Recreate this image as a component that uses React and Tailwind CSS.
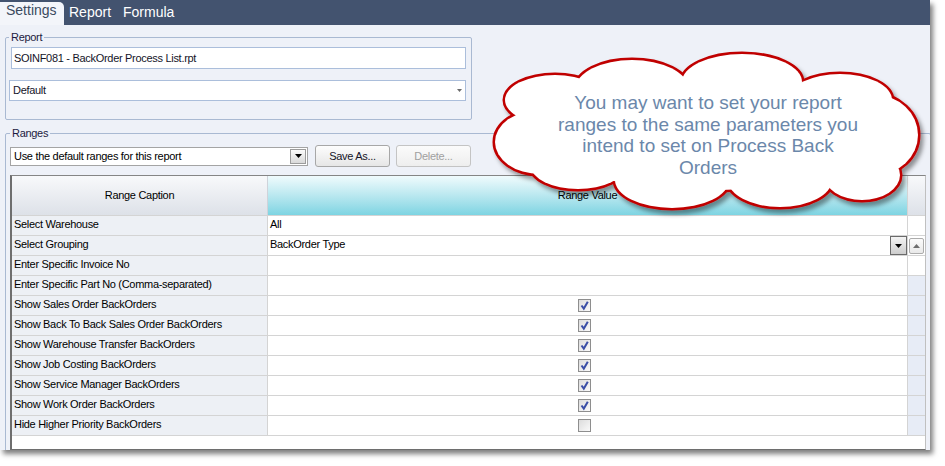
import React from 'react';

const rows = [
  { caption: 'Select Warehouse', value: 'All' },
  { caption: 'Select Grouping', value: 'BackOrder Type', combo: true },
  { caption: 'Enter Specific Invoice No' },
  { caption: 'Enter Specific Part No (Comma-separated)' },
  { caption: 'Show Sales Order BackOrders', check: true },
  { caption: 'Show Back To Back Sales Order BackOrders', check: true },
  { caption: 'Show Warehouse Transfer BackOrders', check: true },
  { caption: 'Show Job Costing BackOrders', check: true },
  { caption: 'Show Service Manager BackOrders', check: true },
  { caption: 'Show Work Order BackOrders', check: true },
  { caption: 'Hide Higher Priority BackOrders', check: false },
];

// cloud bumps, in page coordinates
const bumps = [
  [555, 100, 50, 25],
  [632, 88, 56, 28],
  [742, 82, 60, 28],
  [840, 100, 52, 26],
  [875, 135, 43, 40],
  [862, 175, 38, 25],
  [780, 180, 52, 27],
  [672, 180, 57, 28],
  [578, 166, 47, 23],
  [540, 142, 45, 32],
  [710, 135, 175, 55],
];

function DownArrow({ className = 'fill-black' }) {
  return (
    <svg width="7" height="4" viewBox="0 0 7 4" className={className}>
      <polygon points="0,0 7,0 3.5,4" />
    </svg>
  );
}

function CheckBox({ checked }) {
  return (
    <div className="flex h-[13px] w-[13px] items-center justify-center border border-[#8e8e8e] bg-gradient-to-br from-[#dcdcdc] to-[#fafafa]">
      {checked && (
        <svg width="11" height="11" viewBox="0 0 11 11">
          <path d="M2.5 5.5 L4.8 8.6 L8.8 1.8" fill="none" stroke="#3a4ea6" strokeWidth="2" />
        </svg>
      )}
    </div>
  );
}

function Cloud() {
  return (
    <svg
      className="absolute left-[490px] top-[48px]"
      width="440"
      height="172"
      viewBox="490 48 440 172"
    >
      <defs>
        <filter id="cloudShadow" x="-10%" y="-10%" width="120%" height="130%">
          <feDropShadow dx="3" dy="4" stdDeviation="2" floodColor="#000" floodOpacity="0.4" />
        </filter>
      </defs>
      <g filter="url(#cloudShadow)">
        {bumps.map(([cx, cy, rx, ry], i) => (
          <ellipse key={'s' + i} cx={cx} cy={cy} rx={rx} ry={ry} fill="#fff" stroke="#c00000" strokeWidth="5" />
        ))}
        {bumps.map(([cx, cy, rx, ry], i) => (
          <ellipse key={'f' + i} cx={cx} cy={cy} rx={rx} ry={ry} fill="#fff" />
        ))}
      </g>
    </svg>
  );
}

export default function App() {
  return (
    <div className="min-h-screen bg-white font-['Liberation_Sans',Arial,sans-serif]">
      <div className="relative h-[450px] w-[930px] overflow-hidden bg-[#eef1f8] shadow-[3px_4px_5px_rgba(0,0,0,0.5)]">
        {/* tab strip */}
        <div className="flex h-[25px] items-end bg-[#43536f] text-[14px] leading-[17px]">
          <div className="h-[23px] w-[64px] rounded-tr-[5px] bg-[#f3f5fa] pl-[6px] text-[#3b4a5f]">Settings</div>
          <div className="ml-[5px] h-[23px] pt-[2px] text-white">Report</div>
          <div className="ml-[12px] h-[23px] pt-[2px] text-white">Formula</div>
        </div>

        <div className="px-[5px] text-[11px] tracking-[-0.3px] text-black">
          {/* Report group */}
          <fieldset className="mt-[6px] h-[89px] w-[465px] rounded-[2px] border border-[#a9b9d2] px-[5px]">
            <legend className="-ml-[2px] px-[2px] leading-[13px] text-[#1c1a40]">Report</legend>
            <div className="mt-[3px] flex h-[22px] w-[455px] items-center border border-[#abbedb] bg-white pl-[2px] text-[#141428]">
              SOINF081 - BackOrder Process List.rpt
            </div>
            <div className="-ml-[2px] mt-[11px] flex h-[21px] w-[457px] items-center justify-between border border-[#abbedb] bg-white pl-[3px] pr-[3px] text-[#141428]">
              <span>Default</span>
              <svg width="5" height="3" viewBox="0 0 5 3" className="fill-[#6a6a6a]">
                <polygon points="0,0 5,0 2.5,3" />
              </svg>
            </div>
          </fieldset>

          {/* Ranges group */}
          <fieldset className="mt-[7px] h-[340px] w-[923px] rounded-[2px] border border-[#a9b9d2] px-[4px]">
            <legend className="px-[2px] leading-[13px] text-[#1c1a40]">Ranges</legend>
            <div className="mt-[5px] flex h-[22px] items-center">
              <div className="flex h-[19px] w-[298px] items-center justify-between border border-[#a4a4a4] bg-white pl-[3px] pr-[1px]">
                <span>Use the default ranges for this report</span>
                <div className="flex h-[15px] w-[16px] items-center justify-center border border-[#9c9c9c] bg-gradient-to-b from-[#fbfbfb] to-[#d9d9d9]">
                  <DownArrow />
                </div>
              </div>
              <button className="ml-[7px] h-[22px] w-[75px] rounded-[3px] border border-[#a7a7a7] bg-gradient-to-b from-[#fdfdfd] to-[#e6e6e6] text-[#141428]">
                Save As...
              </button>
              <button className="ml-[6px] h-[22px] w-[75px] rounded-[3px] border border-[#c4c4c4] bg-gradient-to-b from-[#fbfbfb] to-[#eeeeee] text-[#a0a0a0]">
                Delete...
              </button>
            </div>

            {/* grid */}
            <div className="mt-[8px] h-[275px] w-[916px] border-b border-l-2 border-r border-t border-b-[#6e6e6e] border-l-[#6e6e6e] border-r-[#c0c0c0] border-t-[#858585] bg-white">
              <div className="flex h-[40px] border-b border-[#d4d4d4]">
                <div className="flex w-[256px] items-center justify-center border-r border-[#cfd3da] bg-gradient-to-b from-[#f8f9fb] to-[#dde1e8]">
                  Range Caption
                </div>
                <div className="flex w-[640px] items-center justify-center border-r border-[#d4d4d4] bg-gradient-to-b from-[#f0fbfd] to-[#7dd4e2]">
                  Range Value
                </div>
                <div className="w-[17px] bg-gradient-to-b from-[#f8f9fb] to-[#dde1e8]" />
              </div>
              {rows.map((r, i) => (
                <div key={i} className="flex h-[20px] border-b border-[#d4d4d4]">
                  <div className="flex w-[256px] items-center border-r border-[#d4d4d4] bg-[#edf0f5] pb-[2px] pl-[2px]">{r.caption}</div>
                  <div className="flex w-[640px] items-center border-r border-[#d4d4d4] pl-[2px]">
                    {r.value && <span className="flex-1 pb-[2px]">{r.value}</span>}
                    {r.combo && (
                      <div className="flex h-[19px] w-[17px] items-center justify-center border border-[#6a6a6a] bg-gradient-to-b from-[#f4f4f4] to-[#cdcdcd]">
                        <DownArrow />
                      </div>
                    )}
                    {r.check !== undefined && (
                      <div className="pl-[308px]">
                        <CheckBox checked={r.check} />
                      </div>
                    )}
                  </div>
                  <div className={`flex w-[17px] items-center justify-center ${i >= 3 ? 'bg-[#e7ecf6]' : 'bg-white'}`}>
                    {i === 1 && (
                      <div className="flex h-[16px] w-[15px] items-center justify-center rounded-[2px] border border-[#acacac] bg-gradient-to-b from-[#fbfbfb] to-[#e9e9e9]">
                        <svg width="7" height="4" viewBox="0 0 7 4" className="fill-[#6e6e6e]">
                          <polygon points="3.5,0 7,4 0,4" />
                        </svg>
                      </div>
                    )}
                  </div>
                </div>
              ))}
            </div>
          </fieldset>
        </div>

        {/* callout */}
        <Cloud />
        <div className="absolute left-[508px] top-[92px] w-[400px] text-center text-[19px] leading-[21.5px] text-[#6b87aa]">
          <div>You may want to set your report</div>
          <div>ranges to the same parameters you</div>
          <div>intend to set on Process Back</div>
          <div>Orders</div>
        </div>
      </div>
    </div>
  );
}
